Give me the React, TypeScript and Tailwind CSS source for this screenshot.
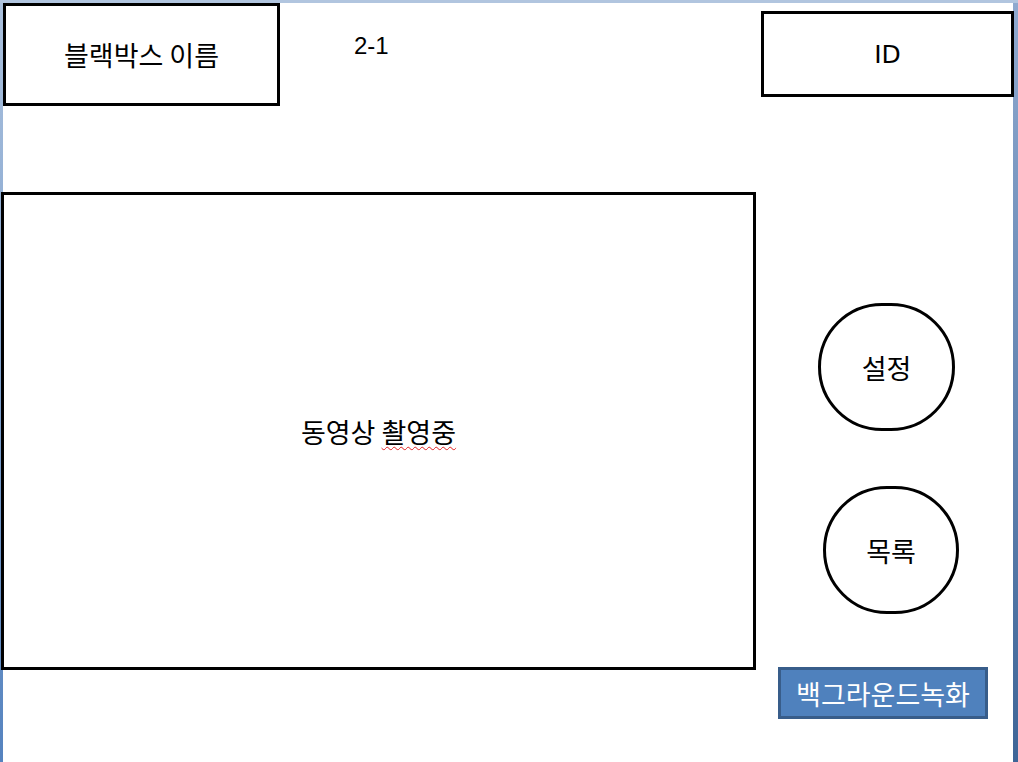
// Slide wireframe: black box recorder main screen
const ko = { fontFamily: '"Noto Sans CJK KR", "Noto Sans", sans-serif' };

export default function App() {
  return (
    <div className="w-[1018px] h-[762px] overflow-hidden bg-white flex flex-col">
      {/* top frame band */}
      <div className="h-[3px] shrink-0 bg-[#b1c5df]" />

      <div className="flex flex-1">
        {/* left frame band */}
        <div className="w-[3px] shrink-0 bg-gradient-to-b from-[#abc1dd] to-[#5583bf]" />

        {/* slide content */}
        <div className="flex-1 flex flex-col text-black" style={ko}>
          {/* header */}
          <div className="flex items-start h-[103px] relative z-10">
            <div className="w-[277px] h-[103px] border-[3px] border-black flex items-center justify-center text-[27px] leading-none">
              블랙박스 이름
            </div>
            <div
              className="ml-[74px] mt-[31px] text-[24px] leading-[24px]"
              style={{ fontFamily: '"Liberation Sans", Arial, sans-serif' }}
            >
              2-1
            </div>
            <div
              className="ml-auto -mr-[1px] mt-[8px] w-[253px] h-[86px] border-[3px] border-black flex items-center justify-center text-[25px] leading-none"
              style={{ fontFamily: '"DejaVu Sans", sans-serif' }}
            >
              ID
            </div>
          </div>

          {/* body */}
          <div className="flex items-start mt-[87px]">
            <div className="-ml-[2px] -mt-[1px] w-[755px] h-[478px] border-[3px] border-black flex items-center justify-center text-[27px] leading-none relative z-10">
              <span>
                동영상{" "}
                <span className="underline decoration-wavy decoration-[#e02020] decoration-1 underline-offset-[3px]">
                  촬영중
                </span>
              </span>
            </div>

            <div className="flex flex-col items-start">
              <button className="ml-[62px] mt-[110px] w-[137px] h-[128px] rounded-full border-[3px] border-black flex items-center justify-center text-[27px] leading-none">
                설정
              </button>
              <button className="ml-[67px] mt-[55px] w-[136px] h-[128px] rounded-full border-[3px] border-black flex items-center justify-center text-[27px] leading-none">
                목록
              </button>
              <button className="ml-[22px] mt-[53px] w-[210px] h-[52px] bg-[#4f81bd] border-[3px] border-[#385d8a] text-white flex items-center justify-center text-[27px] leading-none">
                백그라운드녹화
              </button>
            </div>
          </div>
        </div>

        {/* right frame band */}
        <div className="w-[5px] shrink-0 bg-gradient-to-b from-[#8fa9cf] to-[#3e6597]" />
      </div>
    </div>
  );
}
